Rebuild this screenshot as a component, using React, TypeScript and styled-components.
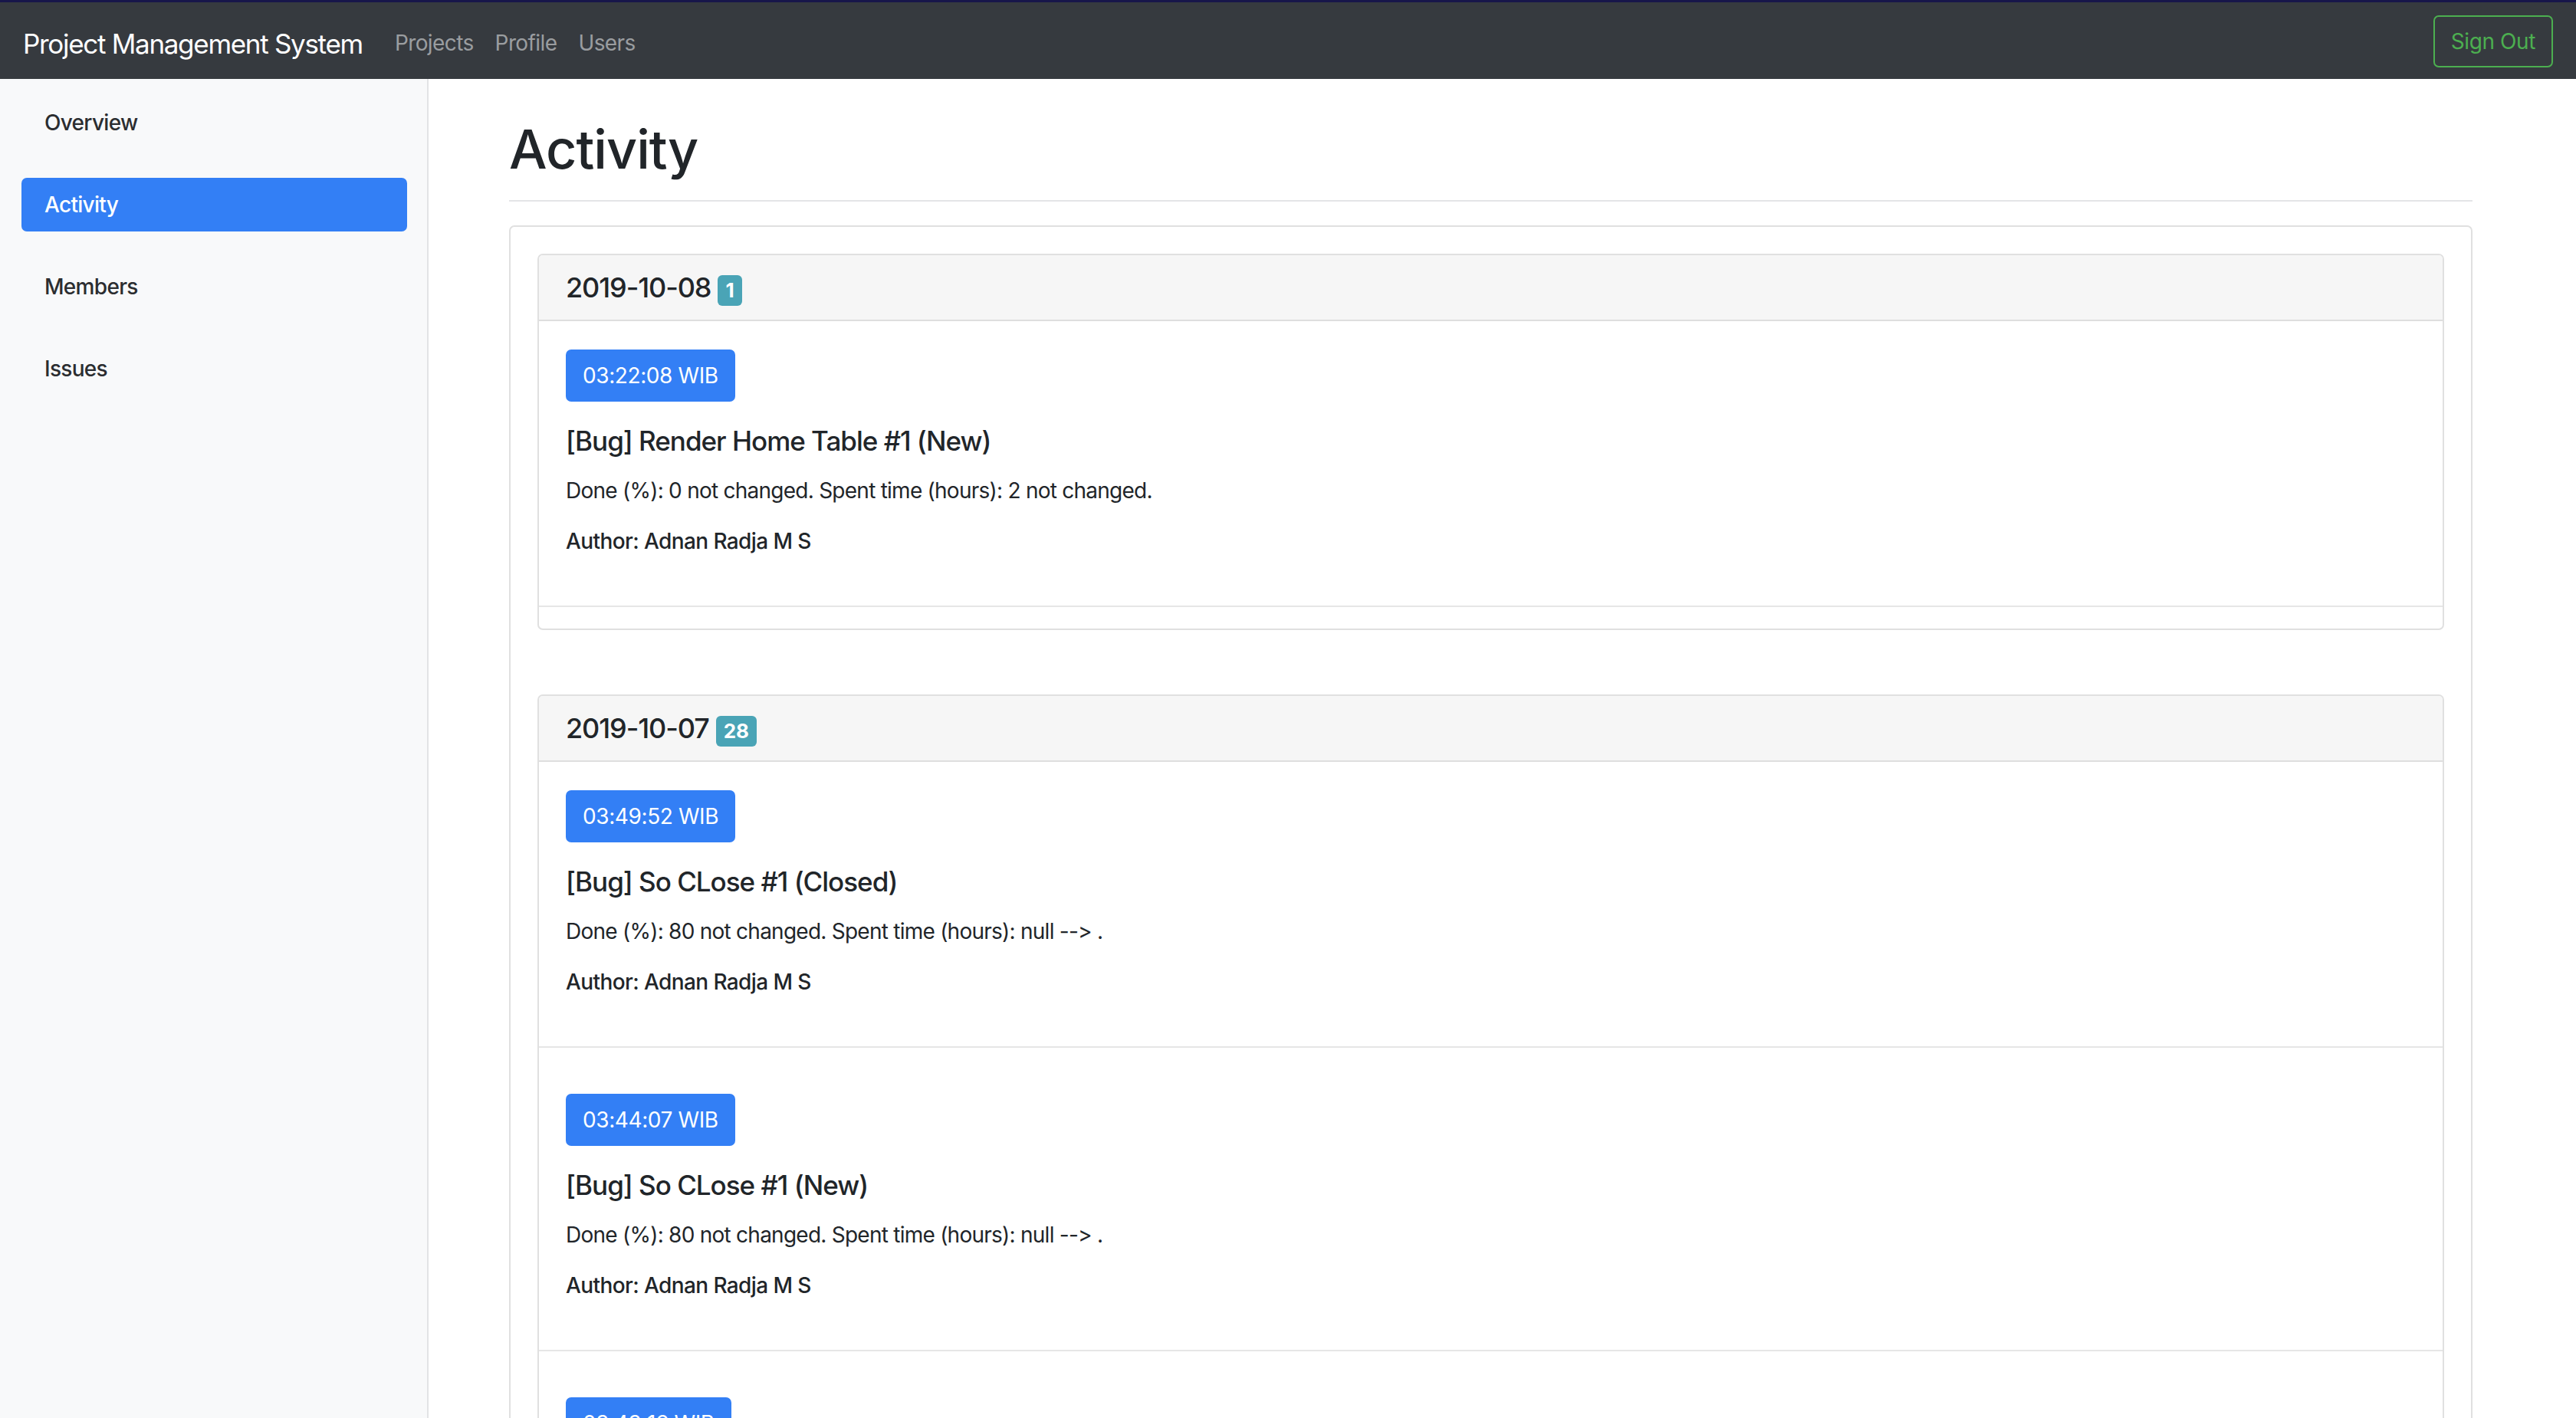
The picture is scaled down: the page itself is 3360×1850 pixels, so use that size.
import React from "react";
import styled, { createGlobalStyle } from "styled-components";

const GlobalStyle = createGlobalStyle`
  html, body {
    margin: 0;
    padding: 0;
    background: #ffffff;
    font-family: Inter, "Noto Sans", "Liberation Sans", sans-serif;
    color: #212529;
  }
  * { box-sizing: border-box; }
`;

const Page = styled.div`
  display: flex;
  flex-direction: column;
  min-height: 100vh;
`;

const TopStrip = styled.div`
  height: 3px;
  background: #17164a;
`;

const Navbar = styled.nav`
  height: 100px;
  background: #363a3f;
  display: flex;
  align-items: center;
  padding: 0 30px 0 30px;
`;

const Brand = styled.a`
  font-size: 35px;
  color: #ffffff;
  margin: 8px 28px 0 0;
  letter-spacing: -1.3px;
  white-space: nowrap;
`;

const NavLinks = styled.div`
  display: flex;
  flex: 1;
  margin-top: 6px;
`;

const NavLink = styled.a`
  font-size: 28px;
  color: #9a9da0;
  padding: 14px;
  letter-spacing: -0.6px;
`;

const OutlineButton = styled.button`
  font-family: inherit;
  font-size: 28px;
  line-height: 42px;
  color: #4caf50;
  background: transparent;
  border: 2px solid #4caf50;
  border-radius: 7px;
  padding: 11px 21px;
  margin-top: 2px;
  letter-spacing: -0.4px;
`;

const Body = styled.div`
  display: flex;
  flex: 1;
`;

const Sidebar = styled.aside`
  width: 559px;
  flex-shrink: 0;
  background: #f8f9fa;
  box-shadow: inset -2px 0 0 #e2e3e5;
  padding: 22px 28px 0 28px;
  display: flex;
  flex-direction: column;
  gap: 37px;
`;

const SideItem = styled.a<{ $active?: boolean }>`
  display: block;
  font-size: 28px;
  line-height: 42px;
  font-weight: 500;
  padding: 14px 30px;
  border-radius: 7px;
  color: ${(p) => (p.$active ? "#ffffff" : "#2b2d30")};
  background: ${(p) => (p.$active ? "#337ff5" : "transparent")};
  letter-spacing: -0.7px;
`;

const Main = styled.main`
  flex: 1;
  min-width: 0;
  padding: 28px 135px 0 105px;
`;

const PageHeader = styled.div`
  padding-top: 22px;
  padding-bottom: 24px;
  border-bottom: 2px solid #e4e5e7;
  margin-bottom: 31px;
`;

const Title = styled.h1`
  margin: 0;
  font-size: 70px;
  line-height: 84px;
  font-weight: 500;
  letter-spacing: -1px;
`;

const Card = styled.div`
  border: 2px solid #e0e0e0;
  border-radius: 7px;
  background: #ffffff;
`;

const OuterBody = styled.div`
  padding: 35px;
  display: flex;
  flex-direction: column;
  gap: 84px;
`;

const CardHeader = styled.div`
  background: #f6f6f6;
  border-bottom: 2px solid #dedede;
  padding: 21px 35px;
  border-radius: 5px 5px 0 0;
`;

const DateTitle = styled.h5`
  margin: 0;
  height: 42px;
  font-size: 36px;
  line-height: 42px;
  font-weight: 500;
  letter-spacing: -1.1px;
  display: flex;
  align-items: flex-start;
  gap: 9px;
`;

const CountBadge = styled.span`
  display: inline-block;
  background: #4aa4b6;
  color: #ffffff;
  font-size: 26px;
  line-height: 26px;
  font-weight: 700;
  letter-spacing: 0;
  padding: 7px 10px;
  margin-top: 5px;
  border-radius: 6px;
`;

const ItemList = styled.div`
  padding-bottom: 28px;
`;

const Item = styled.div<{ $first?: boolean }>`
  padding: ${(p) => (p.$first ? "37px" : "60px")} 35px 35px 35px;
  border-bottom: 2px solid #e6e6e6;
`;

const TimeButton = styled.span`
  display: inline-block;
  background: #337ff5;
  color: #ffffff;
  font-size: 28px;
  line-height: 42px;
  padding: 13px 22px;
  border-radius: 7px;
  letter-spacing: -0.4px;
`;

const ItemTitle = styled.h5`
  margin: 30px 0 23px 0;
  font-size: 35px;
  line-height: 42px;
  font-weight: 500;
  letter-spacing: -1px;
`;

const Para = styled.p`
  margin: 0 0 24px 0;
  font-size: 28px;
  line-height: 42px;
  letter-spacing: -0.75px;
`;

const AuthorPara = styled(Para)`
  font-weight: 500;
  margin-bottom: 28px;
  letter-spacing: -0.6px;
`;

type Activity = { time: string; title: string; detail: string; author: string };
type Day = { date: string; count: number; items: Activity[] };

const days: Day[] = [
  {
    date: "2019-10-08",
    count: 1,
    items: [
      {
        time: "03:22:08 WIB",
        title: "[Bug] Render Home Table #1 (New)",
        detail: "Done (%): 0 not changed. Spent time (hours): 2 not changed.",
        author: "Adnan Radja M S",
      },
    ],
  },
  {
    date: "2019-10-07",
    count: 28,
    items: [
      {
        time: "03:49:52 WIB",
        title: "[Bug] So CLose #1 (Closed)",
        detail: "Done (%): 80 not changed. Spent time (hours): null --> .",
        author: "Adnan Radja M S",
      },
      {
        time: "03:44:07 WIB",
        title: "[Bug] So CLose #1 (New)",
        detail: "Done (%): 80 not changed. Spent time (hours): null --> .",
        author: "Adnan Radja M S",
      },
      {
        time: "03:43:16 WIB",
        title: "[Bug] So CLose #1 (New)",
        detail: "Done (%): 80 not changed. Spent time (hours): null --> .",
        author: "Adnan Radja M S",
      },
    ],
  },
];

export default function App() {
  return (
    <Page>
      <GlobalStyle />
      <TopStrip />
      <Navbar>
        <Brand>Project Management System</Brand>
        <NavLinks>
          <NavLink>Projects</NavLink>
          <NavLink>Profile</NavLink>
          <NavLink>Users</NavLink>
        </NavLinks>
        <OutlineButton>Sign Out</OutlineButton>
      </Navbar>
      <Body>
        <Sidebar>
          <SideItem>Overview</SideItem>
          <SideItem $active>Activity</SideItem>
          <SideItem>Members</SideItem>
          <SideItem>Issues</SideItem>
        </Sidebar>
        <Main>
          <PageHeader>
            <Title>Activity</Title>
          </PageHeader>
          <Card>
            <OuterBody>
              {days.map((d) => (
                <Card key={d.date}>
                  <CardHeader>
                    <DateTitle>
                      {d.date}
                      <CountBadge>{d.count}</CountBadge>
                    </DateTitle>
                  </CardHeader>
                  <ItemList>
                    {d.items.map((it, i) => (
                      <Item key={i} $first={i === 0}>
                        <TimeButton>{it.time}</TimeButton>
                        <ItemTitle>{it.title}</ItemTitle>
                        <Para>{it.detail}</Para>
                        <AuthorPara>Author: {it.author}</AuthorPara>
                      </Item>
                    ))}
                  </ItemList>
                </Card>
              ))}
            </OuterBody>
          </Card>
        </Main>
      </Body>
    </Page>
  );
}
